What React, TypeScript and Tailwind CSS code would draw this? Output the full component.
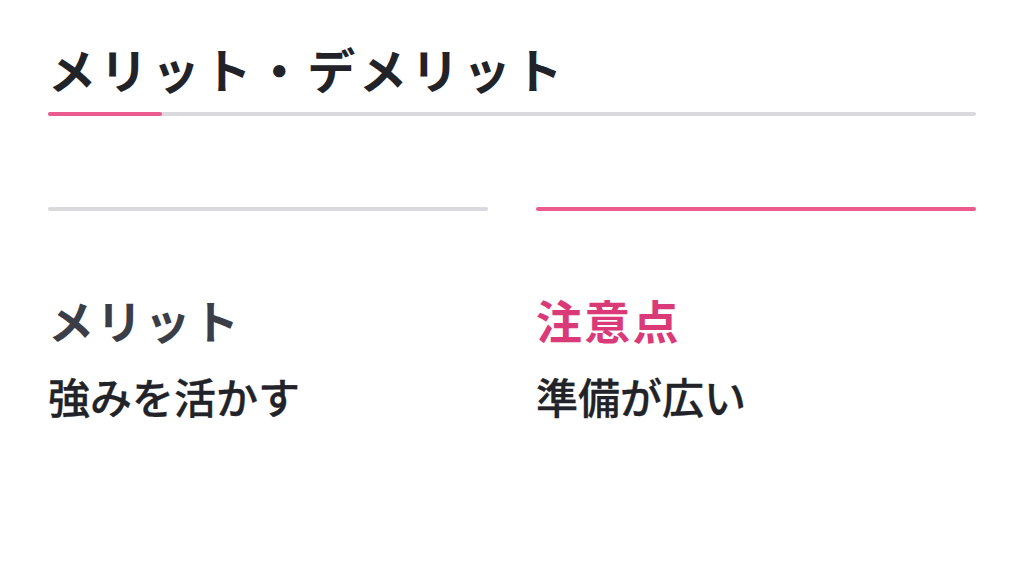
import React from "react";

type Point = {
  label: string;
  title: string;
  active: boolean;
};

const points: Point[] = [
  { label: "メリット", title: "強みを活かす", active: false },
  { label: "注意点", title: "準備が広い", active: true },
];

const App = () => {
  return (
    <div
      className="w-[1024px] h-[576px] bg-white px-12 pt-[38px]"
      style={{ fontFamily: '"Noto Sans CJK JP", "Noto Sans", sans-serif' }}
    >
      <h1 className="text-[48px] leading-[60px] font-semibold tracking-[0.08em] text-[#222329]">
        メリット・デメリット
      </h1>
      <div className="mt-[14px] h-1 rounded-full bg-[#d9d9de] flex">
        <div className="w-[114px] h-1 rounded-full bg-[#ec5b8f]" />
      </div>

      <div className="mt-[91px] grid grid-cols-2 gap-12">
        {points.map((p, i) => (
          <Column key={i} point={p} />
        ))}
      </div>
    </div>
  );
};

export default App;

const Column = ({ point }: { point: Point }) => {
  return (
    <div>
      <div
        className={`h-1 rounded-full ${
          point.active ? "bg-[#ec5b8f]" : "bg-[#d9d9de]"
        }`}
      />
      <h2
        className={`mt-[80px] text-[46px] leading-[56px] font-semibold tracking-[0.05em] ${
          point.active ? "text-[#db3a78]" : "text-[#3b3e47]"
        }`}
      >
        {point.label}
      </h2>
      <p className="mt-[23px] text-[42px] leading-[52px] font-medium text-[#222329] [-webkit-text-stroke:0.3px_#222329]">
        {point.title}
      </p>
    </div>
  );
};
